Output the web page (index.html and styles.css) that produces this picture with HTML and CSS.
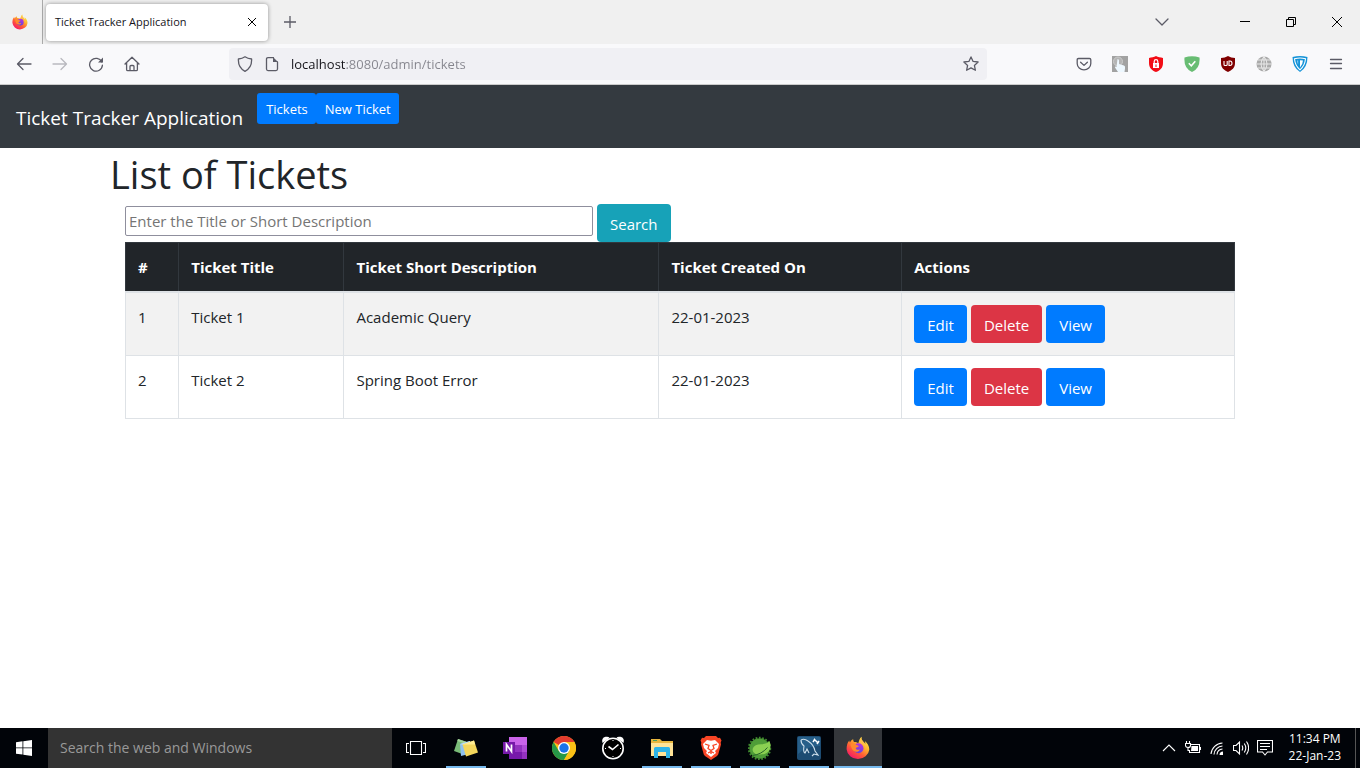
FILE: index.html
```html
<!DOCTYPE html>
<html lang="en">
<head>
<meta charset="utf-8">
<meta name="viewport" content="width=device-width, initial-scale=1">
<title>Ticket Tracker Application</title>
<link rel="stylesheet" href="styles.css">
</head>
<body>
<svg class="sprite" aria-hidden="true">
  <defs>
    <linearGradient id="ff-body" x1="0.85" y1="0.05" x2="0.2" y2="0.95">
      <stop offset="0" stop-color="#fff44f"/><stop offset="0.35" stop-color="#ffb22c"/><stop offset="0.65" stop-color="#ff5b36"/><stop offset="1" stop-color="#f5156c"/>
    </linearGradient>
    <linearGradient id="ff-core" x1="0.7" y1="0" x2="0.3" y2="1">
      <stop offset="0" stop-color="#b833e1"/><stop offset="1" stop-color="#5b46dc"/>
    </linearGradient>
    <symbol id="firefox" viewBox="0 0 24 24">
      <path fill="url(#ff-body)" d="M15.600.8c-.6 2.200.6 3.800 2 5.100.8.7 1.400 1.500 1.700 2.200.1-1.200-.1-2.200-.5-3.100 2.700 1.900 4.500 5.200 4.500 8.400A11.400 10.800 0 0 1 .6 13.200C.6 9.500 1.500 6.300 3.400 4.600c0 .9.200 1.500.6 2 .6-1.600 1.700-2.800 3.200-3.400-.1 1.100.2 2 .8 2.800 1.700-.1 3.100.5 4.300 1.200.9-2.500 1.300-4.900 3.300-6.400z"/>
      <path fill="#ffbd4f" d="M15.600.8c-.6 2.200.6 3.800 2 5.100 2.900 2.600 3.500 5.900 1.700 9.100 1.900-4.800-1.500-7.300-5.100-7.500-.7-2.300-.1-4.900 1.400-6.700z" opacity=".8"/>
      <circle cx="12.500" cy="12.300" r="5" fill="url(#ff-core)"/>
      <path fill="#ff8a2e" d="M4.500 8.500C6 6.800 8.500 7 10.500 9c.6.600 2 .7 2.300 1-.4 1-1.400 1.300-2.300 1.500-1.200.5-.6 2 .6 2.200 1.200.2 2-.5 2.800-.2-1 2-3 2.800-5 2C6.200 14.500 5 11.500 4.500 8.500z"/>
    </symbol>
  </defs>
</svg>

<header class="browser">
  <div class="tabs">
    <div class="tabs-pinned"><svg class="icon16" role="img" aria-label="Firefox"><use href="#firefox"/></svg></div>
    <div class="tab">
      <span class="tab-title">Ticket Tracker Application</span>
      <button class="bare" aria-label="Close tab"><svg width="10" height="10" viewBox="0 0 10 10"><path d="M1 1l8 8M9 1l-8 8" class="ink"/></svg></button>
    </div>
    <button class="bare new-tab" aria-label="New tab"><svg width="12" height="12" viewBox="0 0 12 12"><path d="M6 0v12M0 6h12" class="line"/></svg></button>
    <button class="bare all-tabs" aria-label="List all tabs"><svg width="14" height="14" viewBox="0 0 14 14"><path d="M1 4l6 6 6-6" class="line"/></svg></button>
    <div class="window-controls">
      <button class="bare" aria-label="Minimize"><svg width="10" height="10" viewBox="0 0 10 10"><path d="M0 4.500h10" class="ink"/></svg></button>
      <button class="bare" aria-label="Restore"><svg width="10" height="10" viewBox="0 0 10 10"><path d="M.5 2.500h7v7h-7zM2.500 2.500v-2h7v7h-2" class="ink"/></svg></button>
      <button class="bare" aria-label="Close"><svg width="10" height="10" viewBox="0 0 10 10"><path d="M0 0l10 10M10 0L0 10" class="ink"/></svg></button>
    </div>
  </div>
  <div class="toolbar">
    <div class="nav-icons">
      <button class="bare" aria-label="Back"><svg class="icon16" viewBox="0 0 16 16"><path d="M15 8H2M7 2.500L1.500 8 7 13.500" class="line"/></svg></button>
      <button class="bare faded" aria-label="Forward" disabled><svg class="icon16" viewBox="0 0 16 16"><path d="M1 8h13M9 2.500L14.500 8 9 13.500" class="line"/></svg></button>
      <button class="bare" aria-label="Reload"><svg class="icon16" viewBox="0 0 16 16"><path d="M13.800 6A6.400 6.400 0 1 0 14.400 9.200" class="line"/><path d="M15 1.500V6.500H10z" fill="#5b5b66"/></svg></button>
      <button class="bare" aria-label="Home"><svg class="icon16" viewBox="0 0 16 16"><path d="M1 8L8 1.300 15 8M2.600 7v6.400q0 1.300 1.200 1.300h8.400q1.200 0 1.200-1.300V7M6 14.500V10.500q0-1 1-1h2q1 0 1 1v4" class="line"/></svg></button>
    </div>
    <div class="address">
      <svg class="icon16" viewBox="0 0 16 16"><path d="M8 .8c1.800 1.300 4 2 6.600 2.200.3 5.600-1.500 9.800-6.600 12.300C2.900 12.800 1.100 8.600 1.400 3 4 2.800 6.200 2.100 8 .8z" class="line"/></svg>
      <svg class="icon16" viewBox="0 0 16 16"><path d="M9.500 1.600H4q-1.500 0-1.500 1.500v10q0 1.500 1.500 1.500h8q1.500 0 1.500-1.500V6" class="line"/><path d="M9 1l5 5H9z" fill="#5b5b66"/></svg>
      <input class="address-input" type="text" aria-label="Address" value="localhost:8080/admin/tickets">
      <button class="bare" aria-label="Bookmark this page"><svg class="icon16" viewBox="0 0 16 16"><path d="M8 .9l2.100 4.500 5 .6-3.700 3.400 1 4.900L8 11.900l-4.400 2.400 1-4.900L.9 6l5-.6z" class="line"/></svg></button>
    </div>
    <div class="extensions">
      <button class="bare" aria-label="Pocket"><svg class="icon16" viewBox="0 0 16 16"><path d="M2.500 2.500h11q1.300 0 1.300 1.300v3.700a6.800 6.400 0 0 1-13.600 0V3.800q0-1.300 1.300-1.300zM4.600 6.200L8 9.400l3.400-3.200" class="line"/></svg></button>
      <button class="bare" aria-label="Click extension"><svg class="icon16" viewBox="0 0 16 16"><path fill="#a2a2a2" d="M0 0h16v16H0z"/><circle cx="6" cy="5.500" r="4.500" fill="#b4b4b4" stroke="#ccc"/><path fill="#eef8ff" d="M5.500 3q1.500 0 1.500 1.500V8l5 1.500q1.500.7 1 3L12.500 16H6L3 11.500q-.5-1.500 1.500-.5z"/></svg></button>
      <button class="bare" aria-label="Lock shield"><svg class="icon16" viewBox="0 0 16 16"><path fill="#f20d16" d="M8 0c2 1 4.500 1.500 7 2v5c0 5-3 7.500-7 9-4-1.500-7-4-7-9V2c2.500-.5 5-1 7-2z"/><path fill="#fff" d="M5 7h6v5H5z"/><path d="M6.200 7V5.500a1.800 1.800 0 0 1 3.600 0V7" fill="none" stroke="#fff" stroke-width="1.200"/><path fill="#f20d16" d="M7.500 8.500h1V11h-1z"/></svg></button>
      <button class="bare" aria-label="Safety check"><svg class="icon16" viewBox="0 0 16 16"><path fill="#68bd73" d="M.5 1.500Q8-1 15.500 1.500 16.500 12 8 16-.5 12 .5 1.500z"/><path d="M4.800 7.300l2.500 2.500 4-4.500" fill="none" stroke="#fff" stroke-width="1.600"/></svg></button>
      <button class="bare" aria-label="uBlock Origin"><svg class="icon16" viewBox="0 0 16 16"><path fill="#800000" d="M8 0c2 1.300 4.500 2 7 2v5c0 5-3 7-7 9-4-2-7-4-7-9V2c2.500 0 5-.7 7-2z"/><path d="M4 5v3.500q0 1 1 1h1.200q1 0 1-1V5M9 5v4.500h1q2 0 2-2.200T10 5z" fill="none" stroke="#fff" stroke-width="1.100"/></svg></button>
      <button class="bare" aria-label="Globe"><svg class="icon16" viewBox="0 0 16 16"><circle cx="8" cy="8" r="7.500" fill="#aaa"/><path d="M8 .5v15M.5 8h15M2 4h12M2 12h12M8 .5q-6 7.500 0 15M8 .5q6 7.500 0 15" fill="none" stroke="#eee" stroke-width=".9"/></svg></button>
      <button class="bare" aria-label="VPN"><svg class="icon16" viewBox="0 0 16 16"><path fill="#1593d8" d="M.5 1Q8-.8 15.500 1 15.500 11.500 8 16 .5 11.500.5 1z"/><path d="M2.500 2.700Q8 1.300 13.500 2.700 13 9.500 8 13.800 3 9.500 2.500 2.700z" fill="none" stroke="#fff" stroke-width="1.100"/><path fill="#fff" d="M8 4.200l3 .4Q10.800 8.500 8 11.500z"/><path fill="#8fd0f2" d="M5 4.600l1.200-.2v4.200Q5.200 7 5 4.600z"/></svg></button>
      <button class="bare" aria-label="Open menu"><svg class="icon16" viewBox="0 0 16 16"><path d="M2.500 3.500h11M2.500 7.500h11M2.500 12.500h11" class="line"/></svg></button>
    </div>
  </div>
</header>

<nav class="navbar">
  <a class="brand" href="#">Ticket Tracker Application</a>
  <a class="btn btn-small btn-primary" href="#">Tickets</a><a class="btn btn-small btn-primary" href="#">New Ticket</a>
</nav>

<main class="container">
  <h1>List of Tickets</h1>
  <div class="content">
    <form class="search-form">
      <input class="search-input" type="text" placeholder="Enter the Title or Short Description" aria-label="Title or short description">
      <button class="btn btn-info" type="button">Search</button>
    </form>
    <table class="tickets">
      <colgroup><col class="col-id"><col class="col-title"><col class="col-desc"><col class="col-date"><col class="col-actions"></colgroup>
      <thead>
        <tr><th>#</th><th>Ticket Title</th><th>Ticket Short Description</th><th>Ticket Created On</th><th>Actions</th></tr>
      </thead>
      <tbody>
        <tr>
          <td>1</td><td>Ticket 1</td><td>Academic Query</td><td>22-01-2023</td>
          <td><div class="actions"><a class="btn btn-primary" href="#">Edit</a><a class="btn btn-danger" href="#">Delete</a><a class="btn btn-primary" href="#">View</a></div></td>
        </tr>
        <tr>
          <td>2</td><td>Ticket 2</td><td>Spring Boot Error</td><td>22-01-2023</td>
          <td><div class="actions"><a class="btn btn-primary" href="#">Edit</a><a class="btn btn-danger" href="#">Delete</a><a class="btn btn-primary" href="#">View</a></div></td>
        </tr>
      </tbody>
    </table>
  </div>
</main>

<footer class="taskbar">
  <button class="bare start" aria-label="Start"><svg class="icon16" viewBox="0 0 16 16"><path fill="#fff" d="M0 2.200l6.500-.9v6.200H0zM7.300 1.200L16 0v7.500H7.300zM0 8.300h6.500v6.300L0 13.700zM7.300 8.300H16V16l-8.700-1.200z"/></svg></button>
  <input class="task-search" type="text" placeholder="Search the web and Windows" aria-label="Search the web and Windows">
  <button class="bare task-view" aria-label="Task view"><svg width="20" height="14" viewBox="0 0 20 14"><path d="M4.500.5h11v13h-11zM3 2.500H.5v9H3M17 2.500h2.500v9H17" class="light"/></svg></button>
  <div class="apps">
    <button class="app running" aria-label="Sticky Notes"><svg class="icon24" viewBox="0 0 24 24"><path fill="#79bb78" d="M4 3l12 4-5 12L0 15z"/><path fill="#a5d39b" d="M4 3l12 4-1 2L3.300 5z"/><path fill="#8fc1ef" d="M6 8l10-3 3 12-12 3z"/><path fill="#bcddfa" d="M6 8l10-3v6z"/><path fill="#f3d65c" d="M8.500 8.500L20 4.500l4 12-12 4z"/><path fill="#ffec91" d="M8.500 8.500L20 4.500l1.200 4z"/></svg></button>
    <button class="app" aria-label="OneNote"><svg class="icon24" viewBox="0 0 24 24"><path fill="#ca64ea" d="M6 1h18v8H6z"/><path fill="#ae4bd5" d="M19 9h5v7h-5z"/><path fill="#9332bf" d="M6 9h13v7H6z"/><path fill="#7719aa" d="M6 16h13v7H6z"/><path fill="#9332bf" d="M19 16h5v7h-5z"/><path fill="#7719aa" d="M0 6h12v12H0z"/><path d="M3.500 15.500v-7l5 7v-7" fill="none" stroke="#fff" stroke-width="1.700"/></svg></button>
    <button class="app" aria-label="Chrome"><svg class="icon24" viewBox="0 0 24 24"><circle cx="12" cy="12" r="12" fill="#fbc116"/><path fill="#e33b2e" d="M12 12L1.600 6A12 12 0 0 1 22.400 6z"/><path fill="#279847" d="M1.600 6A12 12 0 0 0 12 24l5.200-9H6.800z"/><path fill="#fbc116" d="M12 6h10.400A12 12 0 0 1 12 24l5.200-9z"/><circle cx="12" cy="12" r="6" fill="#fff"/><circle cx="12" cy="12" r="4.700" fill="#1a73e8"/></svg></button>
    <button class="app" aria-label="Alarms and Clock"><svg class="icon24" viewBox="0 0 24 24"><path d="M1.500 7Q0 2 4.500.8q3-.6 4 1M22.500 7Q24 2 19.500.8q-3-.6-4 1" fill="#fff"/><circle cx="12" cy="12.500" r="10.200" fill="#000" stroke="#fff" stroke-width="1.600"/><path d="M7.500 10.500l4 3 6-5" fill="none" stroke="#fff" stroke-width="1.600"/><path d="M12 4v1M12 20v1M4 12.500h1M19 12.500h1" stroke="#fff"/></svg></button>
    <button class="app running" aria-label="File Explorer"><svg class="icon24" viewBox="0 0 24 24"><path fill="#e8b63e" d="M1 3h9l2 2h11v4H1z"/><path fill="#4a9d58" d="M3 4h4v1H3z"/><path fill="#ffe397" d="M1 7h22v13H1z"/><path fill="#2eb4e8" d="M4 12.500q0-1.500 1.500-1.500h13q1.500 0 1.500 1.500V22h-4v-6H8v6H4z"/></svg></button>
    <button class="app running" aria-label="Brave"><svg class="icon24" viewBox="0 0 24 24"><path fill="#f84525" d="M7 0h10l2 2 2-.3 1.500 2.800-.8 2 .3 2-2.800 10-1.200 1.500-6 4-6-4L4.800 18.500 2 8.500l.3-2-.8-2L3 1.700 5 2z"/><path fill="#fff" d="M8 4l4 .8L16 4l4 4-1 4-3 3 1 2-5 4-5-4 1-2-3-3-1-4z"/><path d="M6 8l4 1.500-1 3 3 2 3-2-1-3L18 8M12 14.500V18M9 17l3-1.500 3 1.500" fill="none" stroke="#f84525" stroke-width="1.300"/></svg></button>
    <button class="app running" aria-label="Spring Tools"><svg class="icon24" viewBox="0 0 24 24"><circle cx="11.500" cy="12.500" r="10.200" fill="#4f9d38"/><circle cx="11.500" cy="12.500" r="10.700" fill="none" stroke="#418c2f" stroke-width="2" stroke-dasharray="1.700 1.600"/><path fill="#8bd052" d="M21.500 5q3 8-3 12-4 2.500-11 1-4-2-2.500-6 1.500-3.500 8-3.800Q19 8 21.500 5z"/><path d="M4.500 19.500q9-1 15-8" fill="none" stroke="#27642a"/></svg></button>
    <button class="app running" aria-label="MySQL Workbench"><svg class="icon24" viewBox="0 0 24 24"><rect width="24" height="24" rx="2" fill="#1d4c72"/><path fill="#275f89" d="M1 1h22v9Q10 10 1 18z"/><path d="M4 4q3-2 7 1 6 4 7 10l3 4-4-1-2 2M4 4q0 4 3 6-1 6 1 7l2-4 2 4" fill="none" stroke="#cfe0ec" stroke-width="1.100"/><path d="M17 3l4 4M16 6l2-3M20 8l2-3" stroke="#fff" stroke-width="1.500"/></svg></button>
    <button class="app running active" aria-label="Firefox"><svg class="icon24"><use href="#firefox"/></svg></button>
  </div>
  <div class="tray">
    <button class="bare" aria-label="Show hidden icons"><svg class="icon16" viewBox="0 0 16 16"><path d="M2 11l6-6 6 6" class="light"/></svg></button>
    <button class="bare" aria-label="Battery"><svg class="icon16" viewBox="0 0 16 16"><path d="M5.500 4.500h9v8h-10V10M15.500 7v3M1.500 1v3M4.500 1v3M.5 3.500h5v2q0 2-2.500 2t-2.500-2zM3 7.500v3h2" class="light"/><path fill="#fff" d="M6.500 6h6.500v5H6z"/></svg></button>
    <button class="bare" aria-label="Wi-Fi"><svg class="icon16" viewBox="0 0 16 16"><path d="M2 14A12 12 0 0 1 13.500 3M5 14.500A9 9 0 0 1 13.500 6M8 14.500A6 6 0 0 1 13.500 9" class="light"/><path fill="#fff" d="M10.500 15a3.500 3.500 0 0 1 3.500-3.500V15z"/></svg></button>
    <button class="bare" aria-label="Volume"><svg class="icon16" viewBox="0 0 16 16"><path d="M.5 5.500h2.500L6.500 2v12L3 10.500H.5zM9 5.500q1.500 2.500 0 5M11.300 3.500q3 4.500 0 9M13.500 1.500q4.300 6.500 0 13" class="light"/></svg></button>
    <button class="bare" aria-label="Notifications"><svg class="icon16" viewBox="0 0 16 16"><path d="M.5.500h15v11.500h-5L8 15l-2.500-3h-5zM3 3.500h10M3 6.500h10M3 9.500h7" class="light"/></svg></button>
    <div class="clock"><span>11:34 PM</span><span>22-Jan-23</span></div>
  </div>
</footer>
</body>
</html>
```
FILE: styles.css
```css
* { box-sizing: border-box; }

body {
  margin: 0;
  min-height: 100vh;
  display: flex;
  flex-direction: column;
  background: #fff;
  color: #212529;
  font: 15px/24px "Open Sans", "Noto Sans", sans-serif;
}

a { color: inherit; text-decoration: none; }
button, input { font: inherit; }
svg { display: block; flex: none; }

.sprite { position: absolute; width: 0; height: 0; }
.icon16 { width: 16px; height: 16px; }
.icon24 { width: 24px; height: 24px; }
.line { fill: none; stroke: #5b5b66; stroke-width: 1.3; stroke-linecap: round; stroke-linejoin: round; }
.ink { fill: none; stroke: #000; }
.light { fill: none; stroke: #fff; stroke-width: 1.1; }

.bare {
  display: flex;
  align-items: center;
  justify-content: center;
  padding: 0;
  border: 0;
  background: none;
}
.faded { opacity: 0.4; }

/* Browser window */
.tabs {
  display: flex;
  align-items: center;
  height: 44px;
  background: #f0f0f0;
}
.tabs-pinned {
  display: flex;
  align-items: center;
  align-self: stretch;
  width: 43px;
  padding-left: 12px;
  border-right: 1px solid #aaa;
}
.tab {
  display: flex;
  align-items: center;
  justify-content: space-between;
  width: 222px;
  height: 37px;
  margin-left: 3px;
  padding: 0 11px 0 9px;
  border-radius: 4px;
  background: #fff;
  box-shadow: 0 0 4px rgba(0, 0, 0, 0.4);
  color: #15141a;
}
.tab-title { font-size: 11px; }
.new-tab { margin-left: 16px; }
.all-tabs { margin-left: auto; margin-right: 53px; }
.window-controls { display: flex; }
.window-controls .bare { width: 46px; height: 30px; }

.toolbar {
  display: flex;
  align-items: center;
  height: 41px;
  border-bottom: 1px solid #ccc;
  background: #f9f9fb;
}
.nav-icons { display: flex; gap: 20px; width: 229px; padding-left: 16px; }
.address {
  flex: 1;
  display: flex;
  align-items: center;
  gap: 11px;
  height: 32px;
  padding: 0 8px;
  border-radius: 4px;
  background: #f0f0f4;
}
.address-input {
  flex: 1;
  min-width: 0;
  padding: 0;
  border: 0;
  outline: 0;
  color: #8a8a92;
  font-size: 13px;
  background: linear-gradient(to right, #15141a 55px, #85858d 55px);
  -webkit-background-clip: text;
  background-clip: text;
  -webkit-text-fill-color: transparent;
}
.extensions {
  display: flex;
  justify-content: flex-end;
  gap: 20px;
  width: 373px;
  padding-right: 16px;
}

/* Application */
.navbar {
  display: flex;
  align-items: flex-start;
  min-height: 63px;
  padding: 8px 16px;
  background: #343a40;
  color: #fff;
}
.brand { margin-right: 14px; padding-top: 9px; font-size: 19px; line-height: 32px; }

.btn {
  display: inline-block;
  height: 38px;
  padding: 8px 13px 6px;
  border: 0;
  border-radius: 4px;
  color: #fff;
}
.btn-small { height: 31px; padding: 6px 8px 4px 9px; border-radius: 3px; font-size: 13px; line-height: 21px; }
.btn-primary { background: #007bff; }
.btn-danger { background: #dc3545; }
.btn-info { background: #17a2b8; }

.container {
  flex: 1;
  width: 100%;
  max-width: 1140px;
  margin: 0 auto;
}
h1 {
  margin: 0 0 6px;
  padding-top: 2px;
  font-size: 38px;
  font-weight: 400;
  line-height: 48px;
}
.content { padding: 0 15px; }
.search-form { display: flex; align-items: flex-start; gap: 4px; }
.search-input {
  width: 468px;
  height: 30px;
  margin-top: 2px;
  padding: 0 3px;
  border: 1px solid #8f8f9d;
  border-radius: 2px;
  background: #fff;
}
.search-input::placeholder { color: #757575; opacity: 1; }

.tickets {
  width: 100%;
  table-layout: fixed;
  border-collapse: collapse;
}
.col-id { width: 4.8%; }
.col-title { width: 14.9%; }
.col-desc { width: 28.4%; }
.col-date { width: 21.9%; }
.col-actions { width: 30%; }
.tickets th, .tickets td {
  padding: 12px;
  border: 1px solid #dee2e6;
  text-align: left;
  vertical-align: top;
}
.tickets th {
  border-color: #32383e;
  border-bottom: 2px solid #dee2e6;
  background: #212529;
  color: #fff;
  font-weight: 700;
}
.tickets tbody tr:nth-child(odd) { background: #f2f2f2; }
.actions { display: flex; gap: 4px; }

/* Desktop taskbar */
.taskbar {
  display: flex;
  height: 40px;
  background: #010409;
  color: #fff;
}
.start { width: 48px; }
.task-search {
  width: 344px;
  padding: 0 12px;
  border: 0;
  background: #333;
  color: #fff;
  font-size: 14px;
}
.task-search::placeholder { color: #999; opacity: 1; }
.task-view { width: 48px; }
.apps { display: flex; gap: 1px; padding-left: 2px; }
.app {
  display: flex;
  align-items: center;
  justify-content: center;
  width: 48px;
  padding: 0;
  border: 0;
  background: none;
}
.running { background: linear-gradient(#76b9ed, #76b9ed) center bottom / 40px 2px no-repeat; }
.active { background-color: #34373b; background-size: 48px 2px; }
.tray { display: flex; align-items: center; gap: 8px; margin-left: auto; padding-right: 4px; }
.clock {
  display: flex;
  flex-direction: column;
  align-self: stretch;
  align-items: center;
  justify-content: center;
  padding: 0 14px 2px 8px;
  border-right: 1px solid #555;
  font-size: 12px;
  line-height: 17px;
}
```
